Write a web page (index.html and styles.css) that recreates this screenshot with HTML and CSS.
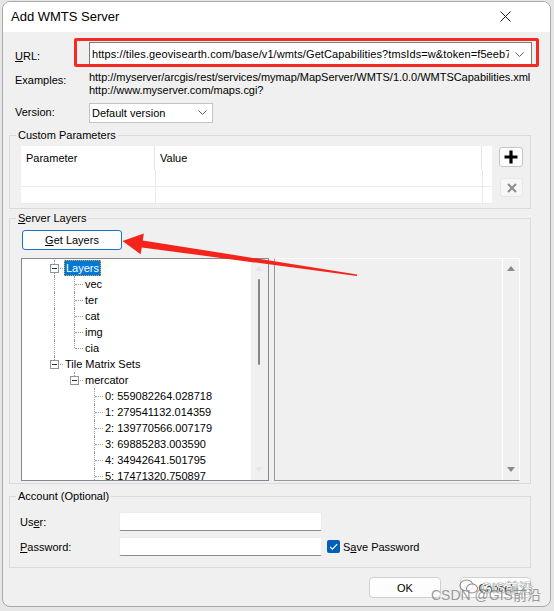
FILE: index.html
```html
<!DOCTYPE html>
<html>
<head>
<meta charset="utf-8">
<link rel="stylesheet" href="styles.css">
</head>
<body>
<div class="window">
  <div class="titlebar">
    <span class="title">Add WMTS Server</span>
    <svg class="close" width="11" height="11" viewBox="0 0 11 11"><path d="M0.5 0.5 L10.5 10.5 M10.5 0.5 L0.5 10.5" stroke="#1a1a1a" stroke-width="1" fill="none"/></svg>
  </div>
  <div class="content">
    <div class="row url-row">
      <span class="lbl"><u>U</u>RL:</span>
      <div class="combo">
        <span class="combo-text">https://tiles.geovisearth.com/base/v1/wmts/GetCapabilities?tmsIds=w&amp;token=f5eeb77c0b1a</span>
        <svg class="chev" width="9" height="5" viewBox="0 0 9 5"><path d="M0.5 0.5 L4.5 4.5 L8.5 0.5" stroke="#606060" fill="none"/></svg>
      </div>
    </div>
    <div class="row examples-row">
      <span class="lbl">Examples:</span>
      <div class="examples">
        <div>http://myserver/arcgis/rest/services/mymap/MapServer/WMTS/1.0.0/WMTSCapabilities.xml</div>
        <div>http://www.myserver.com/maps.cgi?</div>
      </div>
    </div>
    <div class="row version-row">
      <span class="lbl">Version:</span>
      <div class="select">
        <span>Default version</span>
        <svg class="chev" width="9" height="5" viewBox="0 0 9 5"><path d="M0.5 0.5 L4.5 4.5 L8.5 0.5" stroke="#606060" fill="none"/></svg>
      </div>
    </div>

    <fieldset class="group params">
      <legend>Custom Parameters</legend>
      <div class="params-body">
        <div class="grid">
          <div class="grid-head">
            <div class="c1">Parameter</div>
            <div class="c2">Value</div>
            <div class="c3"></div>
          </div>
          <div class="grid-row"><div class="c1"></div><div class="c2"></div><div class="c3"></div></div>
          <div class="grid-row"><div class="c1"></div><div class="c2"></div><div class="c3"></div></div>
        </div>
        <div class="side-btns">
          <div class="icon-btn add">
            <svg width="14" height="14" viewBox="0 0 14 14"><path d="M7 0.5 V13.5 M0.5 7 H13.5" stroke="#000" stroke-width="3.2" fill="none"/></svg>
          </div>
          <div class="icon-btn del">
            <svg width="10" height="10" viewBox="0 0 10 10"><path d="M1 1 L9 9 M9 1 L1 9" stroke="#8c8c8c" stroke-width="2" fill="none"/></svg>
          </div>
        </div>
      </div>
    </fieldset>

    <fieldset class="group layers">
      <legend><u>S</u>erver Layers</legend>
      <div class="layers-body">
        <div class="btn-get"><u>G</u>et Layers</div>
        <div class="panels">
          <div class="tree">
            <div class="tree-items">
              <div class="trow"><span class="cell t"><span class="exp"></span></span><span class="tlabel sel">Layers</span></div>
              <div class="trow"><span class="cell v"></span><span class="cell t"></span><span class="tlabel">vec</span></div>
              <div class="trow"><span class="cell v"></span><span class="cell t"></span><span class="tlabel">ter</span></div>
              <div class="trow"><span class="cell v"></span><span class="cell t"></span><span class="tlabel">cat</span></div>
              <div class="trow"><span class="cell v"></span><span class="cell t"></span><span class="tlabel">img</span></div>
              <div class="trow"><span class="cell v"></span><span class="cell l"></span><span class="tlabel">cia</span></div>
              <div class="trow"><span class="cell l"><span class="exp"></span></span><span class="tlabel">Tile Matrix Sets</span></div>
              <div class="trow"><span class="cell"></span><span class="cell l"><span class="exp"></span></span><span class="tlabel">mercator</span></div>
              <div class="trow"><span class="cell"></span><span class="cell"></span><span class="cell t"></span><span class="tlabel">0: 559082264.028718</span></div>
              <div class="trow"><span class="cell"></span><span class="cell"></span><span class="cell t"></span><span class="tlabel">1: 279541132.014359</span></div>
              <div class="trow"><span class="cell"></span><span class="cell"></span><span class="cell t"></span><span class="tlabel">2: 139770566.007179</span></div>
              <div class="trow"><span class="cell"></span><span class="cell"></span><span class="cell t"></span><span class="tlabel">3: 69885283.003590</span></div>
              <div class="trow"><span class="cell"></span><span class="cell"></span><span class="cell t"></span><span class="tlabel">4: 34942641.501795</span></div>
              <div class="trow"><span class="cell"></span><span class="cell"></span><span class="cell t"></span><span class="tlabel">5: 17471320.750897</span></div>
            </div>
            <div class="vscroll thin">
              <span class="arr up faint"></span>
              <span class="thumb"></span>
              <span class="arr down faint"></span>
            </div>
          </div>
          <div class="preview">
            <div class="vscroll wide">
              <span class="arr up"></span>
              <span class="arr down"></span>
            </div>
          </div>
        </div>
      </div>
    </fieldset>

    <fieldset class="group account">
      <legend>Account (Optional)</legend>
      <div class="acct-body">
        <div class="arow">
          <span class="albl">Us<u>e</u>r:</span>
          <div class="input"></div>
        </div>
        <div class="arow pw">
          <span class="albl"><u>P</u>assword:</span>
          <div class="input"></div>
          <span class="check"><svg width="13" height="13" viewBox="0 0 13 13"><path d="M3 6.8 L5.4 9.2 L10.2 4.2" stroke="#fff" stroke-width="1.2" fill="none"/></svg></span>
          <span class="check-lbl">S<u>a</u>ve Password</span>
        </div>
      </div>
    </fieldset>

    <div class="btns">
      <div class="btn">OK</div>
      <div class="btn">Cancel</div>
    </div>
  </div>

  <div class="redbox"></div>
  <svg class="arrow" width="554" height="611" viewBox="0 0 554 611">
    <polygon points="122.5,241 143.8,233.5 142.8,240.4 357.1,274.5 356.9,276.1 141.8,247.4 140.6,254.2" fill="#f4241b"/>
  </svg>
  <div class="wm1">
    <svg width="20" height="16" viewBox="0 0 20 16"><ellipse cx="7.5" cy="6.5" rx="6.5" ry="5.5" fill="none" stroke="#8a8a8a" stroke-width="1.1"/><ellipse cx="13" cy="9.5" rx="5.5" ry="4.5" fill="rgba(255,255,255,0.85)" stroke="#8a8a8a" stroke-width="1.1"/></svg>
    <span>GIS前沿</span>
  </div>
  <div class="wm2">CSDN @GIS前沿</div>
</div>
</body>
</html>
```

FILE: styles.css
```css
* { box-sizing: border-box; }
html, body { margin: 0; padding: 0; }
body {
  width: 554px;
  height: 611px;
  overflow: hidden;
  background: #e6e6e6;
  font-family: "Liberation Sans", Arial, sans-serif;
  font-size: 11px;
  color: #000;
}
u { text-decoration: underline; text-underline-offset: 1px; }

.window {
  position: relative;
  margin: 1px 0 0 2px;
  width: 549px;
  height: 606px;
  border: 1px solid #a9a9a9;
  border-radius: 8px;
  background: #f0f0f0;
  display: flex;
  flex-direction: column;
  overflow: hidden;
}

.titlebar {
  height: 30px;
  flex: none;
  background: #fff;
  display: flex;
  align-items: center;
  justify-content: space-between;
  padding: 0 39px 2px 8px;
}
.title { font-size: 13px; }
.close { display: block; }

.content {
  flex: 1;
  padding: 10px 19px 0 6px;
  display: flex;
  flex-direction: column;
}

.row { display: flex; padding-left: 6px; }
.lbl { width: 74px; flex: none; line-height: 13px; }

.url-row { height: 24px; align-items: flex-start; }
.url-row .lbl { margin-top: 8px; }
.combo {
  flex: 1;
  margin-right: -1px;
  height: 24px;
  background: #fff;
  border: 1px solid #7a7a7a;
  display: flex;
  align-items: center;
  padding: 0 7px 0 2px;
  overflow: hidden;
}
.combo-text { flex: 1; white-space: nowrap; overflow: hidden; letter-spacing: 0.1px; }
.chev { display: block; flex: none; margin-left: 6px; }

.examples-row { margin-top: 5px; height: 26px; }
.examples-row .lbl { margin-top: 3px; }
.examples { line-height: 13px; white-space: nowrap; letter-spacing: -0.03px; }

.version-row { margin-top: 5px; height: 21px; align-items: center; }
.select {
  width: 124px;
  height: 20px;
  background: #fff;
  border: 1px solid #c4c4c4;
  display: flex;
  align-items: center;
  justify-content: space-between;
  padding: 0 5px 0 2px;
}

fieldset.group {
  margin: 0;
  padding: 0;
  min-width: 0;
  border: 1px solid #dadada;
}
fieldset.group legend {
  margin-left: 6px;
  padding: 0 2px;
  height: 16px;
  line-height: 16px;
}

fieldset.params { margin-top: 4px; }
.params-body {
  display: flex;
  gap: 7px;
  padding: 3px 0 4px 11px;
  align-items: flex-start;
}
.grid { width: 471px; height: 58px; background: #fff; flex: none; }
.grid-head { display: flex; height: 24px; align-items: center; }
.grid-head .c1 { width: 134px; height: 24px; line-height: 24px; padding-left: 5px; border-right: 1px solid #e3e3e3; }
.grid-head .c2 { width: 327px; height: 24px; line-height: 24px; padding-left: 5px; border-right: 1px solid #e3e3e3; }
.grid-row { display: flex; height: 17px; border-bottom: 1px solid #eaeaea; }
.grid-row .c1 { width: 135px; border-right: 1px solid #eaeaea; }
.grid-row .c2 { width: 327px; border-right: 1px solid #eaeaea; }

.side-btns { display: flex; flex-direction: column; align-items: flex-start; padding-top: 1px; }
.icon-btn { display: flex; align-items: center; justify-content: center; border-radius: 3px; }
.icon-btn svg { display: block; }
.icon-btn.add { width: 24px; height: 20px; background: #fdfdfd; border: 1px solid #c5c5c5; }
.icon-btn.del { width: 23px; height: 19px; margin: 11px 0 0 1px; background: #f6f6f6; border: 1px solid #e6e6e6; }

fieldset.layers { margin-top: 1px; }
.layers-body { padding: 4px 10px 2px 11px; }
.btn-get {
  margin-left: 1px;
  width: 100px;
  height: 20px;
  border: 1px solid #1a73c8;
  border-radius: 3px;
  background: #fdfdfd;
  display: flex;
  align-items: center;
  justify-content: center;
}
.panels { display: flex; gap: 5px; margin-top: 8px; height: 223px; }
.tree {
  width: 248px;
  height: 223px;
  border: 1px solid #828790;
  background: #fff;
  display: flex;
  overflow: hidden;
}
.tree-items { flex: 1; padding: 1px 0 0 22px; overflow: hidden; }
.trow { display: flex; height: 16px; align-items: center; white-space: nowrap; }
.cell { position: relative; width: 20px; height: 16px; flex: none; }
.cell.v::before, .cell.t::before, .cell.l::before {
  content: "";
  position: absolute;
  left: 10px;
  top: 0;
  bottom: 0;
  border-left: 1px dotted #9a9a9a;
}
.cell.l::before { bottom: 8px; }
.cell.t::after, .cell.l::after {
  content: "";
  position: absolute;
  left: 11px;
  right: 1px;
  top: 8px;
  border-top: 1px dotted #9a9a9a;
}
.exp {
  position: absolute;
  left: 6px;
  top: 4px;
  width: 9px;
  height: 9px;
  background: #fff;
  border: 1px solid #939393;
  z-index: 1;
}
.exp::after {
  content: "";
  position: absolute;
  left: 1px;
  top: 3px;
  width: 5px;
  height: 1px;
  background: #1c2e5c;
}
.tlabel { height: 16px; line-height: 14px; border: 1px solid transparent; padding: 0 1px 0 0; }
.tlabel.sel { background: #0078d7; color: #fff; border: 1px dotted #f0a030; padding: 0 1px 0 1px; }

.vscroll { display: flex; flex-direction: column; align-items: center; flex: none; height: 100%; }
.vscroll.thin { width: 17px; background: #f0f0f0; }
.thumb { width: 2px; height: 86px; margin-top: 8px; background: #858585; border-radius: 1px; }
.arr { width: 0; height: 0; border-left: 4px solid transparent; border-right: 4px solid transparent; }
.arr.up { border-bottom: 5px solid #8a8a8a; margin-top: 7px; }
.arr.down { border-top: 5px solid #8a8a8a; margin-top: auto; margin-bottom: 8px; }
.arr.faint.up { border-bottom-color: #e6e6e6; }
.arr.faint.down { border-top-color: #e6e6e6; }

.preview {
  width: 247px;
  height: 223px;
  background: #f0f0f0;
  border: 1px solid #fff;
  border-left-color: #9a9a9a;
  border-bottom-color: #9a9a9a;
  display: flex;
  justify-content: flex-end;
}
.vscroll.wide { width: 17px; border-left: 1px solid #fff; }

fieldset.account { margin-top: 4px; }
.acct-body { padding: 8px 0 11px 10px; }
.arow { display: flex; align-items: center; height: 19px; }
.arow.pw { margin-top: 6px; }
.albl { width: 99px; flex: none; }
.input {
  width: 203px;
  height: 19px;
  background: #fff;
  border: 1px solid #ececec;
  border-bottom-color: #8a8a8a;
  border-radius: 2px;
}
.check {
  width: 13px;
  height: 13px;
  margin-left: 5px;
  background: #005fb8;
  border-radius: 2px;
  display: flex;
}
.check svg { display: block; }
.check-lbl { margin-left: 3px; }

.btns { display: flex; justify-content: flex-end; gap: 19px; margin-top: 9px; }
.btn {
  width: 72px;
  height: 21px;
  background: #fdfdfd;
  border: 1px solid #d0d0d0;
  border-radius: 4px;
  display: flex;
  align-items: center;
  justify-content: center;
}
.btn + .btn { width: 71px; color: #333; }

.redbox {
  position: absolute;
  left: 71px;
  top: 36px;
  width: 465px;
  height: 29px;
  border: 3px solid #f52a22;
  border-radius: 2px;
  pointer-events: none;
}
.arrow { position: absolute; left: -3px; top: -2px; pointer-events: none; }

.wm1 {
  position: absolute;
  left: 456px;
  top: 575px;
  display: flex;
  align-items: center;
  gap: 2px;
  font-family: "Liberation Sans", "Noto Sans CJK SC", sans-serif;
  font-size: 14px;
  color: rgba(255, 255, 255, 0.95);
  text-shadow: 0 0 1px #555, 0 0 1px #555;
}
.wm1 svg { display: block; }
.wm2 {
  position: absolute;
  left: 428px;
  top: 585px;
  font-family: "Liberation Sans", "Noto Sans CJK SC", sans-serif;
  font-size: 14px;
  line-height: 16px;
  color: rgba(130, 130, 130, 0.8);
  white-space: nowrap;
}
```
